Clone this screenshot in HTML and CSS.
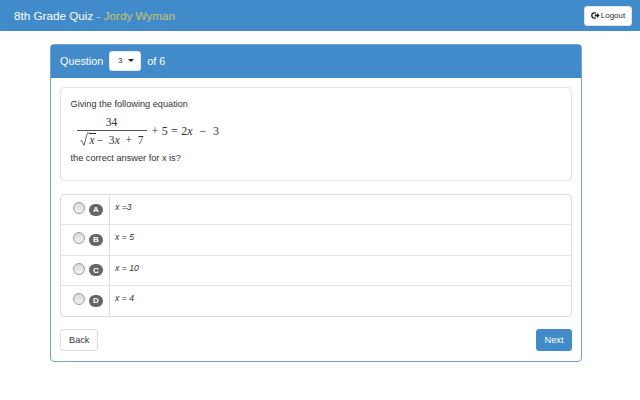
FILE: index.html
```html
<!DOCTYPE html>
<html lang="en">
<head>
    <meta charset="UTF-8">
    <title>8th Grade Quiz</title>
    <link rel="stylesheet" href="styles.css">
</head>
<body>
    <header class="topbar">
        <div class="brand">8th Grade Quiz <span class="dash">-</span> <span class="student">Jordy Wyman</span></div>
        <button class="logout-button">
            <svg class="logout-icon" viewBox="0 0 12 12" width="9" height="9">
                <path d="M6.5 1.6H4.6A3.4 3.4 0 0 0 4.6 10.4H6.5V8.8H4.7A1.8 1.8 0 0 1 4.7 3.2H6.5Z" fill="#222"/>
                <path d="M5 4.8H8V2.6L11.6 6 8 9.4V7.2H5Z" fill="#222"/>
            </svg>
            Logout
        </button>
    </header>

    <main class="panel">
        <div class="panel-heading">
            <span>Question</span>
            <button class="select-button">3 <span class="caret"></span></button>
            <span class="question-total">of 6</span>
        </div>
        <div class="panel-body">
            <div class="well">
                <p>Giving the following equation</p>
                <div class="equation">
                    <span class="fraction">
                        <span class="numerator">34</span>
                        <span class="denominator">
                            <svg class="radical" viewBox="0 0 10 16" width="9" height="15">
                                <path d="M0.5 10L2 9.2L4.4 14.6L8.2 0.6H10" fill="none" stroke="#333" stroke-width="0.8"/>
                            </svg>
                            <i class="radicand">x</i>
                            <span class="term">&minus;&nbsp; 3<i>x</i> &nbsp;+ &nbsp;7</span>
                        </span>
                    </span>
                    <span class="rest">+ 5 = 2<i>x</i> &nbsp;&minus;&nbsp; 3</span>
                </div>
                <p>the correct answer for x is?</p>
            </div>

            <ul class="answers">
                <li class="answer">
                    <div class="answer-pick"><span class="radio"></span><span class="badge">A</span></div>
                    <div class="answer-text">x =3</div>
                </li>
                <li class="answer">
                    <div class="answer-pick"><span class="radio"></span><span class="badge">B</span></div>
                    <div class="answer-text">x = 5</div>
                </li>
                <li class="answer">
                    <div class="answer-pick"><span class="radio"></span><span class="badge">C</span></div>
                    <div class="answer-text">x = 10</div>
                </li>
                <li class="answer">
                    <div class="answer-pick"><span class="radio"></span><span class="badge">D</span></div>
                    <div class="answer-text">x = 4</div>
                </li>
            </ul>

            <div class="actions">
                <button class="btn">Back</button>
                <button class="btn btn-primary">Next</button>
            </div>
        </div>
    </main>
</body>
</html>
```
FILE: styles.css
```css
body {
    margin: 0;
    background-color: #ffffff;
    color: #333333;
    font-family: "Liberation Sans", Arial, sans-serif;
    font-size: 9.2px;
}

button {
    font-family: inherit;
    cursor: pointer;
}

/* Top bar */
.topbar {
    display: flex;
    justify-content: space-between;
    align-items: center;
    height: 31px;
    padding: 0 8px 0 14px;
    background-color: #428bca;
    color: #ffffff;
}

.brand {
    font-size: 11.7px;
}

.dash {
    color: #b9d3e8;
}

.student {
    color: #c9c567;
}

.logout-button {
    display: flex;
    align-items: center;
    gap: 1px;
    height: 20px;
    width: 48px;
    padding: 0;
    justify-content: center;
    background-color: #ffffff;
    border: 1px solid #e4e4e4;
    border-radius: 3px;
    color: #333333;
    font-size: 8px;
}

/* Quiz panel */
.panel {
    width: 530px;
    margin: 13px 0 0 50px;
    border: 1px solid #6fa5d6;
    border-radius: 4px;
}

.panel-heading {
    display: flex;
    align-items: center;
    gap: 5.5px;
    height: 33px;
    padding: 0 9px 2px;
    box-sizing: border-box;
    background-color: #428bca;
    color: #ffffff;
    font-size: 10.8px;
}

.question-total {
    margin-left: 1px;
}

.select-button {
    width: 32px;
    height: 20px;
    padding: 0 0 0 2px;
    background-color: #ffffff;
    border: 1px solid #e8e8e8;
    border-radius: 3px;
    color: #333333;
    font-size: 8px;
}

.caret {
    display: inline-block;
    margin-left: 3px;
    vertical-align: middle;
    border-top: 3px solid #222222;
    border-left: 3px solid transparent;
    border-right: 3px solid transparent;
}

.panel-body {
    padding: 9px 9px 10px;
}

.well {
    box-sizing: border-box;
    height: 94px;
    padding: 11px 9.5px;
    border: 1px solid #e3e3e3;
    border-radius: 4px;
    background-color: #ffffff;
}

.well p {
    margin: 0;
    height: 11px;
    line-height: 11px;
}

/* Equation */
.equation {
    display: flex;
    align-items: center;
    height: 37px;
    margin: 3px 0 3px 6px;
    font-family: "Liberation Serif", "Times New Roman", serif;
    font-size: 11.5px;
}

.fraction {
    display: flex;
    flex-direction: column;
    align-items: center;
    width: 70px;
}

.numerator {
    width: 100%;
    padding-bottom: 2px;
    border-bottom: 1px solid #555555;
    text-align: center;
}

.denominator {
    display: flex;
    align-items: flex-end;
    padding-top: 1px;
    white-space: nowrap;
}

.radicand {
    border-top: 1px solid #333333;
    padding: 0 1px;
    line-height: 13px;
}

.term {
    line-height: 13px;
    margin-left: 1px;
}

.rest {
    margin-left: 5px;
    font-size: 12px;
    word-spacing: 0.4px;
}

/* Answers */
.answers {
    margin: 13px 0 0;
    padding: 0;
    list-style: none;
    border: 1px solid #dddddd;
    border-radius: 4px;
}

.answer {
    display: flex;
    box-sizing: border-box;
    height: 30.25px;
    border-bottom: 1px solid #e4e4e4;
}

.answer:last-child {
    border-bottom: none;
}

.answer-pick {
    display: flex;
    align-items: center;
    justify-content: flex-end;
    gap: 4px;
    box-sizing: border-box;
    width: 49px;
    padding: 0 6px 3px 0;
    border-right: 1px solid #dddddd;
}

.radio {
    box-sizing: border-box;
    width: 12px;
    height: 12px;
    border: 1px solid #9a9a9a;
    border-radius: 50%;
    background: linear-gradient(#d9d9d9, #f2f2f2);
}

.badge {
    display: flex;
    align-items: center;
    justify-content: center;
    width: 14px;
    height: 12px;
    margin-top: 3px;
    border-radius: 6px;
    background-color: #666666;
    color: #ffffff;
    font-size: 8px;
    font-weight: bold;
}

.answer-text {
    padding: 7px 0 0 5px;
    font-style: italic;
    font-size: 8.7px;
}

/* Buttons */
.actions {
    display: flex;
    justify-content: space-between;
    margin-top: 12px;
}

.btn {
    height: 22px;
    padding: 0 8px;
    background-color: #ffffff;
    border: 1px solid #dddddd;
    border-radius: 3px;
    color: #333333;
    font-size: 9.2px;
}

.btn-primary {
    padding: 0 7.5px;
    background-color: #428bca;
    border-color: #428bca;
    color: #ffffff;
}
```
